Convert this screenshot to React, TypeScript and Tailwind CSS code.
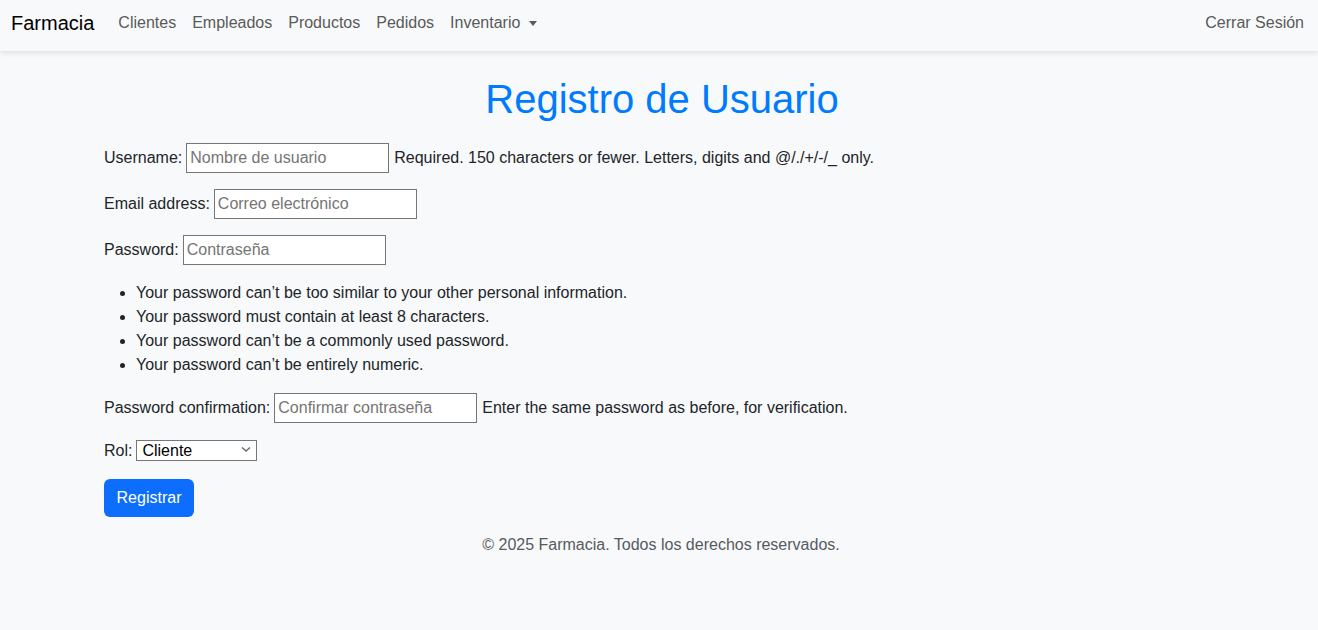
const font = { fontFamily: '"Liberation Sans", Arial, sans-serif' };

function Field({ label, placeholder, help, type = 'text' }: { label: string; placeholder: string; help?: string; type?: string }) {
  return (
    <div className="flex items-center h-[30px] mb-4">
      <label>{label}</label>
      <input
        type={type === 'password' ? 'text' : type}
        placeholder={placeholder}
        className="ml-[4px] w-[203px] h-[30px] border border-[#767676] bg-white px-[3px] text-[16px] text-[#212529] placeholder:text-[#757575] outline-none"
      />
      {help && <span className="ml-[5px]">{help}</span>}
    </div>
  );
}

export default function App() {
  const navLinks = ['Clientes', 'Empleados', 'Productos', 'Pedidos'];
  return (
    <div className="min-h-[630px] bg-[#f8f9fa] text-[16px] text-[#212529]" style={font}>
      <nav className="h-[51px] flex items-start justify-between shadow-[0_2px_5px_rgba(0,0,0,0.1)] bg-[#f8f9fa] relative">
        <div className="flex items-start">
          <span className="pl-[11px] pt-[8px] text-[20px] leading-[30px] text-black">Farmacia</span>
          <div className="flex ml-[16px] pt-[11px] leading-[24px] text-[#595a5c]">
            {navLinks.map((l) => (
              <span key={l} className="px-2">{l}</span>
            ))}
            <span className="px-2 flex items-center">
              Inventario
              <span className="ml-[9px] w-0 h-0 border-l-[4px] border-r-[4px] border-t-[5px] border-l-transparent border-r-transparent border-t-[#595a5c]" />
            </span>
          </div>
        </div>
        <span className="pt-[11px] pr-[14px] leading-[24px] text-[#595a5c]">Cerrar Sesión</span>
      </nav>

      <div className="max-w-[1140px] mx-auto px-[15px]">
        <h1 className="mt-[24px] mb-[20px] pl-[6px] text-center text-[40px] leading-[48px] text-[#007bff]">Registro de Usuario</h1>
        <form>
          <Field label="Username:" placeholder="Nombre de usuario" help="Required. 150 characters or fewer. Letters, digits and @/./+/-/_ only." />
          <Field label="Email address:" placeholder="Correo electrónico" type="email" />
          <Field label="Password:" placeholder="Contraseña" type="password" />
          <ul className="list-disc pl-8 mb-4 leading-[24px]">
            <li>Your password can’t be too similar to your other personal information.</li>
            <li>Your password must contain at least 8 characters.</li>
            <li>Your password can’t be a commonly used password.</li>
            <li>Your password can’t be entirely numeric.</li>
          </ul>
          <Field label="Password confirmation:" placeholder="Confirmar contraseña" help="Enter the same password as before, for verification." type="password" />
          <div className="flex items-center h-[24px] mb-4">
            <label>Rol:</label>
            <div className="relative ml-[4px]">
              <select className="appearance-none w-[121px] h-[21px] border border-[#767676] bg-white pl-[5px] text-[16px] leading-[19px] text-black outline-none">
                <option>Cliente</option>
                <option>Empleado</option>
              </select>
              <svg className="absolute right-[6px] top-[7px] pointer-events-none" width="10" height="7" viewBox="0 0 10 7">
                <path d="M1 1.5 L5 5 L9 1.5" fill="none" stroke="#6b6b6b" strokeWidth="1.5" />
              </svg>
            </div>
          </div>
          <button type="button" className="w-[90px] h-[38px] rounded-[6px] bg-[#0d6efd] text-white text-[16px]">Registrar</button>
        </form>
        <p className="mt-[16px] pl-[4px] text-center leading-[24px] text-[#555b61]">© 2025 Farmacia. Todos los derechos reservados.</p>
      </div>
    </div>
  );
}
